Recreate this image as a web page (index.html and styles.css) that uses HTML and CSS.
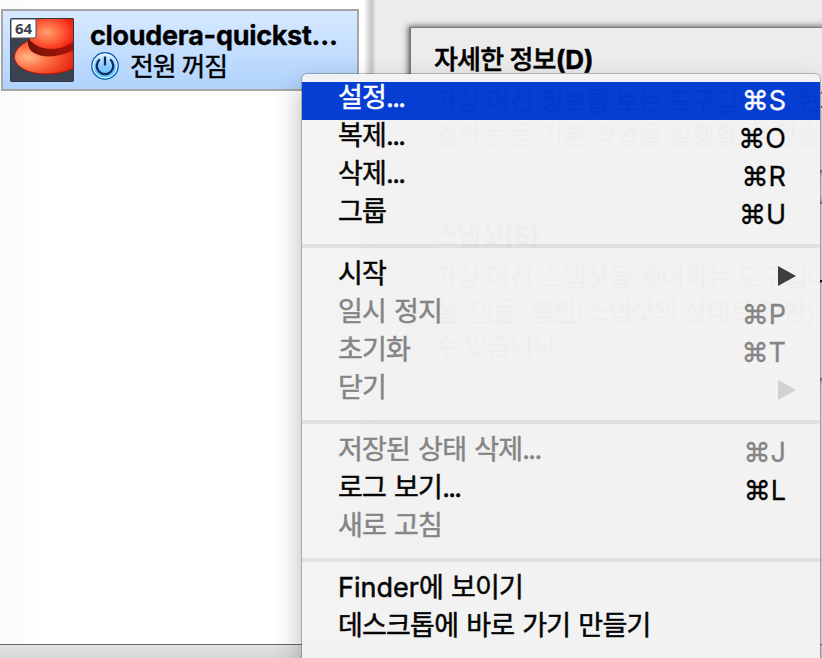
FILE: index.html
```html
<!DOCTYPE html>
<html lang="ko">
<head>
<meta charset="utf-8">
<title>VirtualBox</title>
<link rel="stylesheet" href="styles.css">
</head>
<body>
<div class="window">
  <div class="workspace">
    <aside class="sidebar">
      <div class="machine">
        <svg class="os-icon" width="64" height="64" viewBox="0 0 64 64">
          <defs>
            <radialGradient id="crown" cx=".38" cy=".5" r=".65"><stop offset="0" stop-color="#ffa070"/><stop offset=".5" stop-color="#ff5c38"/><stop offset="1" stop-color="#f01408"/></radialGradient>
            <radialGradient id="brim" cx=".22" cy=".5" r=".8"><stop offset="0" stop-color="#ffb888"/><stop offset=".4" stop-color="#ff7048"/><stop offset="1" stop-color="#e8200c"/></radialGradient>
            <linearGradient id="band" x1="0" y1="0" x2="1" y2="0"><stop offset="0" stop-color="#6e1206"/><stop offset=".5" stop-color="#921508"/><stop offset="1" stop-color="#a81206"/></linearGradient>
            <clipPath id="tile"><rect width="64" height="64" rx="2"/></clipPath>
          </defs>
          <g clip-path="url(#tile)">
            <rect width="64" height="64" fill="#3b4350"/>
            <path d="M18 23C10 27 4 33 4.500 39.500C5.500 50 20 56 36 56C47 56 57 54 66 49V28z" fill="url(#brim)" stroke="#b51408"/>
            <path d="M18 21C17 27 19 32 24 35C35 41 51 39 66 31V20z" fill="url(#band)"/>
            <path d="M19.500 22C21 13 23 3 29 -2H66V22C58 28 50 31 41 31C32 31 24 27 19.500 22z" fill="url(#crown)"/>
          </g>
          <rect x=".5" y=".5" width="63" height="63" rx="2" fill="none" stroke="#303845"/>
          <path d="M1 1h25v17q0 2-2 2H1z" fill="#fff" stroke="#4b5057"/>
          <text class="bits" x="5" y="16">64</text>
        </svg>
        <div class="machine-info">
          <div class="machine-name">cloudera-quickst...</div>
          <div class="machine-state">
            <svg class="power" width="30" height="30" viewBox="0 0 30 30">
              <defs><linearGradient id="orb" x1="0" y1="0" x2="0" y2="1"><stop offset="0" stop-color="#e8f6ff"/><stop offset=".5" stop-color="#8bcbff"/><stop offset="1" stop-color="#4cc5ff"/></linearGradient></defs>
              <circle cx="15" cy="15" r="13.2" fill="url(#orb)" stroke="#1263b5" stroke-width="1.4"/>
              <circle cx="15" cy="15" r="12" fill="none" stroke="#f1faff" stroke-width="1"/>
              <path d="M9.800 8.400a8.300 8.300 0 1 0 10.400 0M15 5.500v9" fill="none" stroke="#0b3060" stroke-width="2.300"/>
            </svg>
            <span>전원 꺼짐</span>
          </div>
        </div>
      </div>
    </aside>
    <div class="splitter"></div>
    <main class="details">
      <section class="card card-details">
        <h2>자세한 정보<b>(D)</b></h2>
        <p>가상 머신 정보를 보는 도구입니다. 현재</p>
        <p>경하는 등 기본 작업을 실행할 수 있습니다.</p>
      </section>
      <section class="card card-snapshots">
        <h2>스냅샷<b>(S)</b></h2>
        <p>가상 머신 스냅샷을 제어하는 도구입니다.</p>
        <p><u>설</u>, <u>이동</u>, <u>복원</u>(스냅샷의 상태로 전환)</p>
        <p>수 있습니다.</p>
      </section>
    </main>
  </div>
  <footer class="statusbar"></footer>
</div>

<nav class="menu">
  <div class="item active"><span>설정<span class="dots">...</span></span><kbd>⌘S</kbd></div>
  <div class="item"><span>복제<span class="dots">...</span></span><kbd>⌘O</kbd></div>
  <div class="item"><span>삭제<span class="dots">...</span></span><kbd>⌘R</kbd></div>
  <div class="item"><span>그룹</span><kbd>⌘U</kbd></div>
  <hr>
  <div class="item"><span>시작</span><i class="arrow"></i></div>
  <div class="item disabled"><span>일시 정지</span><kbd>⌘P</kbd></div>
  <div class="item disabled"><span>초기화</span><kbd>⌘T</kbd></div>
  <div class="item disabled"><span>닫기</span><i class="arrow"></i></div>
  <hr>
  <div class="item disabled"><span>저장된 상태 삭제<span class="dots">...</span></span><kbd>⌘J</kbd></div>
  <div class="item"><span>로그 보기<span class="dots">...</span></span><kbd>⌘L</kbd></div>
  <div class="item disabled"><span>새로 고침</span></div>
  <hr>
  <div class="item"><span><span class="latin">Finder</span>에 보이기</span></div>
  <div class="item"><span>데스크톱에 바로 가기 만들기</span></div>
</nav>
</body>
</html>
```

FILE: styles.css
```css
* { box-sizing: border-box; }
body {
  margin: 0;
  width: 822px;
  height: 658px;
  overflow: hidden;
  position: relative;
  color: #000;
  font: 27px/34px Inter, "Noto Sans CJK KR", sans-serif;
  letter-spacing: -0.8px;
  white-space: nowrap;
}
.window { display: flex; flex-direction: column; height: 658px; }
.workspace { display: flex; height: 644px; }
.sidebar {
  width: 364px;
  padding: 9px 0 0 1px;
  background: linear-gradient(90deg, #fafafa, #fff 42px);
}
.machine {
  display: flex;
  gap: 16px;
  width: 358px;
  height: 82px;
  padding: 7px;
  border: 2px solid #a6a6a6;
  background: linear-gradient(#d8e9ff, #afd3fd);
}
.os-icon { flex: none; }
.bits { font: bold 15px "Open Sans", sans-serif; letter-spacing: 0; fill: #3c434c; }
.machine-name { height: 32px; line-height: 35px; font-weight: 700; letter-spacing: -0.3px; -webkit-text-stroke: 0.3px; }
.machine-state {
  display: flex;
  align-items: center;
  gap: 10px;
  height: 32px;
  font-size: 26px;
  letter-spacing: -1.2px;
  line-height: 36px;
  -webkit-text-stroke: 0.4px;
}
.machine-state span { padding-top: 2px; }
.splitter {
  width: 12px;
  background: linear-gradient(90deg, #fafafa, #d0d0d0 50%, #c6c6c6 65%, #ececec);
}
.details {
  flex: 1;
  padding: 28px 0 0 34px;
  background: #ececec;
  overflow: hidden;
}
.card {
  width: 460px;
  padding: 15px 24px 0 23px;
  background: #ececec;
  border-left: 1px solid #777;
  box-shadow: 0 0 0 1px #808080, 0 0 6px 2px #666;
  font-size: 26px;
  letter-spacing: -0.8px;
}
.card-details { height: 142px; }
.card-snapshots { height: 174px; margin-top: 34px; }
.card h2 { margin: 0 0 8px; font-size: 26px; font-weight: 500; line-height: 34px; -webkit-text-stroke: 0.5px; }
.card h2 b { font-weight: 700; letter-spacing: -0.3px; }
.card p { margin: 0; -webkit-text-stroke: 0.3px; }
.card u { text-decoration-thickness: 2px; }
.statusbar { height: 14px; border-top: 1px solid #666; background: linear-gradient(#e4e4e4, #d6d6d6); }

.menu {
  position: absolute;
  left: 302px;
  top: 74px;
  width: 518px;
  height: 584px;
  padding-top: 8px;
  border-radius: 5px 5px 0 0;
  background: #f3f3f3;
  opacity: 0.98;
  box-shadow: 0 0 0 1px rgba(0, 0, 0, 0.22), 0 12px 28px rgba(0, 0, 0, 0.3);
}
.item {
  display: flex;
  justify-content: space-between;
  height: 38px;
  padding: 0 34px 0 36px;
  line-height: 32px;
  word-spacing: 1.2px;
  -webkit-text-stroke: 0.5px;
}
.item.active { background: #033bd2; color: #fff; }
.item.disabled { color: #838383; }
.item kbd { font: 27px/37px Inter, sans-serif; letter-spacing: 0; -webkit-text-stroke: 0.3px; }
.dots { letter-spacing: -1.7px; }
.latin { letter-spacing: 0; }
.menu hr { height: 4px; margin: 10px 0; border: 0; background: #e0e0e0; }
.arrow {
  width: 18px;
  height: 20px;
  margin: 8px -10px 0 0;
  background: #3d3d3d;
  clip-path: polygon(0 0, 100% 50%, 0 100%);
}
.disabled .arrow { background: #d1d1d1; }
```
